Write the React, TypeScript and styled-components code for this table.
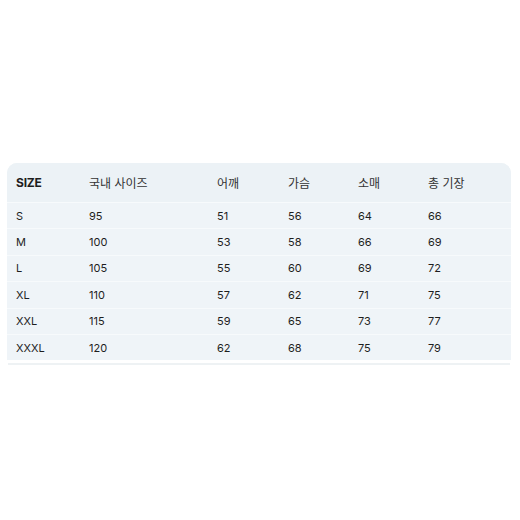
import React from "react";
import styled, { createGlobalStyle } from "styled-components";

const Global = createGlobalStyle`
  html, body { margin: 0; padding: 0; background: #ffffff; }
  body { font-family: "Inter", "Noto Sans CJK KR", sans-serif; }
`;

const Page = styled.div`
  width: 520px;
  height: 520px;
  box-sizing: border-box;
  padding: 163px 9px 0 7px;
`;

const Table = styled.div`
  width: 504px;
  border-radius: 10px 10px 0 0;
  overflow: hidden;
  background: #eef3f7;
  border-bottom: 3px solid #ffffff;
  box-shadow: 0 3px 0 -1px #eef2f4;
`;

const Row = styled.div<{ $head?: boolean }>`
  display: grid;
  grid-template-columns: 73px 128px 71px 70px 70px 1fr;
  align-items: center;
  padding-left: 9px;
  height: ${(p) => (p.$head ? "39px" : "25.4px")};
  background: ${(p) => (p.$head ? "#ecf2f6" : "#eff4f8")};
  & + & {
    border-top: 1px solid #f7fafc;
  }
`;

const Cell = styled.div<{ $head?: boolean; $bold?: boolean }>`
  font-size: ${(p) => (p.$head ? "12px" : "11px")};
  font-weight: ${(p) => (p.$bold ? 700 : 400)};
  color: ${(p) => (p.$head && !p.$bold ? "#333" : "#1e1e1e")};
  letter-spacing: ${(p) => (p.$bold ? "-0.2px" : "0")};
  white-space: nowrap;
`;

const header = ["SIZE", "국내 사이즈", "어깨", "가슴", "소매", "총 기장"];
const data = [
  ["S", "95", "51", "56", "64", "66"],
  ["M", "100", "53", "58", "66", "69"],
  ["L", "105", "55", "60", "69", "72"],
  ["XL", "110", "57", "62", "71", "75"],
  ["XXL", "115", "59", "65", "73", "77"],
  ["XXXL", "120", "62", "68", "75", "79"],
];

export default function App() {
  return (
    <>
      <Global />
      <Page>
        <Table>
          <Row $head>
            {header.map((h, i) => (
              <Cell key={h} $head $bold={i === 0}>
                {h}
              </Cell>
            ))}
          </Row>
          {data.map((r) => (
            <Row key={r[0]}>
              {r.map((c, i) => (
                <Cell key={i}>{c}</Cell>
              ))}
            </Row>
          ))}
        </Table>
      </Page>
    </>
  );
}
